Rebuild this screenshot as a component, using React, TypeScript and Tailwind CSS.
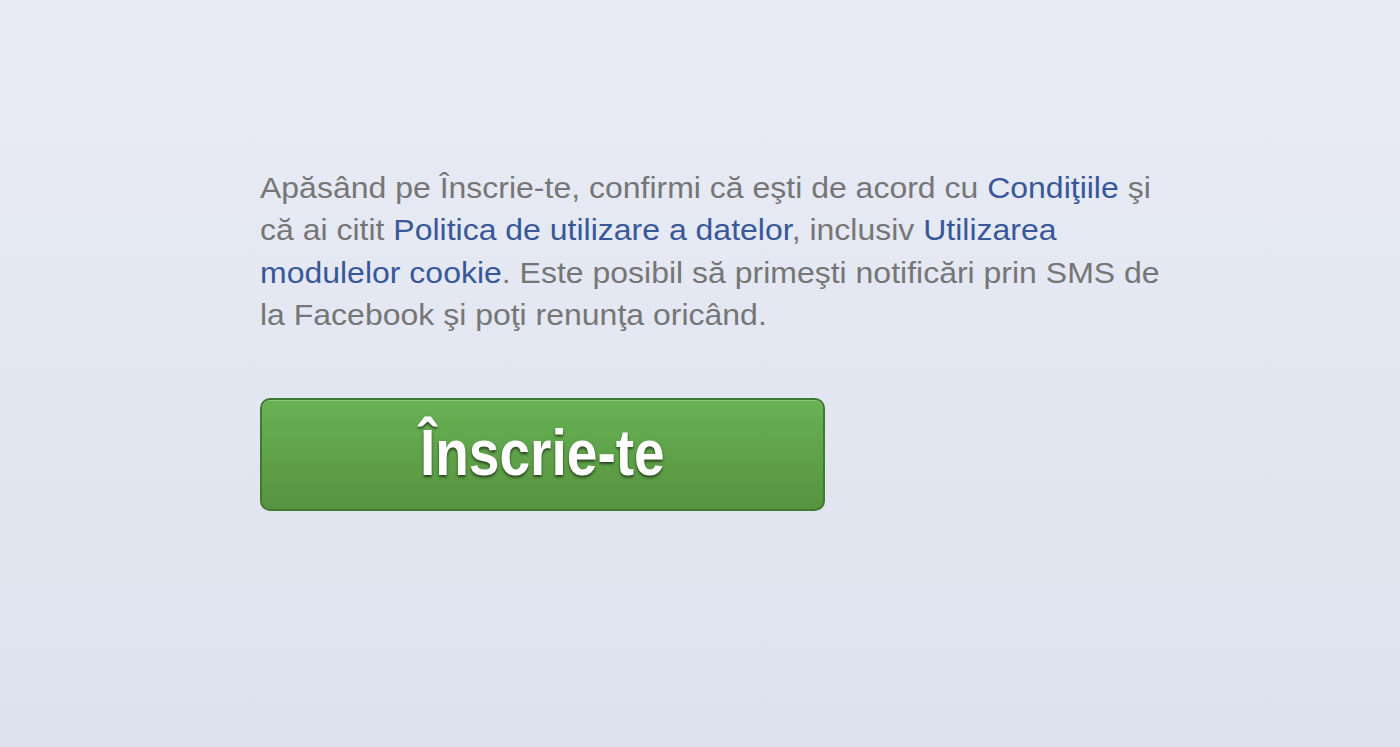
import React from "react";

export default function App() {
  const link = "text-[#385898]";
  return (
    <div className="w-[1400px] h-[747px] overflow-hidden bg-gradient-to-b from-[#e9ecf5] to-[#dde2ee] font-['Liberation_Sans',Arial,sans-serif]">
      <div className="pl-[260px] pt-[167px]">
        <p className="w-[820px] origin-left scale-x-[1.103] whitespace-nowrap text-[29px] leading-[42.3px] text-[#767676]">
          Apăsând pe Înscrie-te, confirmi că eşti de acord cu <span className={link}>Condiţiile</span> şi
          <br />
          că ai citit <span className={link}>Politica de utilizare a datelor</span>, inclusiv{" "}
          <span className={link}>Utilizarea</span>
          <br />
          <span className={link}>modulelor cookie</span>. Este posibil să primeşti notificări prin SMS de
          <br />
          la Facebook şi poţi renunţa oricând.
        </p>
        <button className="mt-[62px] flex h-[113px] w-[565px] items-center justify-center rounded-[10px] border-2 border-[#3f7a2e] bg-gradient-to-b from-[#68b254] to-[#56933f] pb-[3px] shadow-[inset_0_1px_0_rgba(255,255,255,0.25)]">
          <span className="inline-block scale-x-[0.86] text-[64px] font-bold leading-none text-white [text-shadow:0_2px_3px_rgba(0,0,0,0.6)]">
            Înscrie-te
          </span>
        </button>
      </div>
    </div>
  );
}
